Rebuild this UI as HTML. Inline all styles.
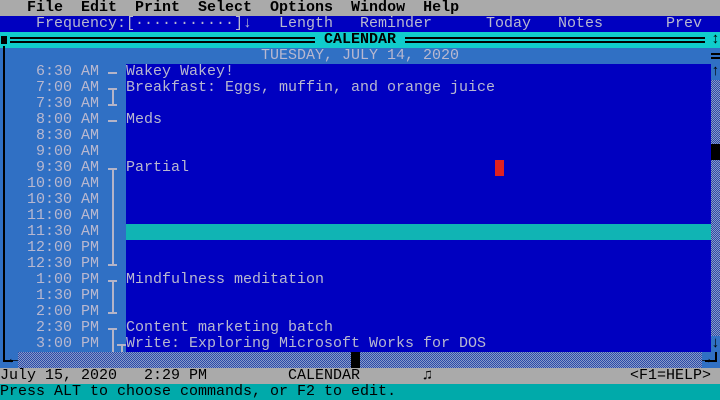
<!DOCTYPE html>
<html><head><meta charset="utf-8"><style>
*{margin:0;padding:0;box-sizing:border-box}
body{width:720px;height:400px;overflow:hidden;background:#0000c0;position:relative;font-family:"Liberation Mono","DejaVu Sans Mono",monospace;font-size:15px;line-height:16px;}
.b{position:absolute}
.t{position:absolute;white-space:pre;height:16px;line-height:16px}
.g{color:#b8b8d0}
.k{color:#000}
.bd{font-weight:bold}
.chk{background:repeating-conic-gradient(#8a9ac8 0 25%,#2a4aa8 0 50%) 0 0/2px 2px}
</style></head><body>
<div class="b" style="left:0;top:0;width:720px;height:16px;background:#aaaaaa"></div>
<div class="b" style="left:0;top:16px;width:720px;height:16px;background:#0000c0"></div>
<div class="b" style="left:0;top:32px;width:720px;height:16px;background:#10cccc"></div>
<div class="b" style="left:0;top:48px;width:711px;height:16px;background:#3070c4"></div>
<div class="b" style="left:0;top:64px;width:126px;height:288px;background:#3070c4"></div>
<div class="b" style="left:126px;top:64px;width:585px;height:288px;background:#0000c0"></div>
<div class="b" style="left:126px;top:224px;width:585px;height:16px;background:#10b4b4"></div>
<div class="b" style="left:0;top:352px;width:720px;height:16px;background:#3070c4"></div>
<div class="b chk" style="left:18px;top:352px;width:684px;height:16px"></div>
<div class="b" style="left:351px;top:352px;width:9px;height:16px;background:#000"></div>
<div class="b" style="left:711px;top:48px;width:9px;height:304px;background:#3070c4"></div>
<div class="b chk" style="left:711px;top:80px;width:9px;height:256px"></div>
<div class="b" style="left:711px;top:144px;width:9px;height:16px;background:#000"></div>
<div class="b" style="left:3px;top:46px;width:2px;height:316px;background:#000"></div>
<div class="b" style="left:3px;top:360px;width:10px;height:2px;background:#000"></div>
<div class="b" style="left:705px;top:360px;width:12px;height:2px;background:#000"></div>
<div class="b" style="left:715px;top:352px;width:2px;height:10px;background:#000"></div>
<div class="b" style="left:0;top:368px;width:720px;height:16px;background:#aaaaaa"></div>
<div class="b" style="left:0;top:384px;width:720px;height:16px;background:#00aaaa"></div>
<div class="b" style="left:495px;top:160px;width:9px;height:16px;background:#e02020"></div>
<div class="b" style="left:10px;top:37px;width:305px;height:6px;border-top:2px solid #000;border-bottom:2px solid #000"></div>
<div class="b" style="left:405px;top:37px;width:300px;height:6px;border-top:2px solid #000;border-bottom:2px solid #000"></div>
<div class="b" style="left:1px;top:36px;width:6px;height:8px;background:#000"></div>
<div class="b" style="left:711px;top:53px;width:9px;height:6px;border-top:2px solid #000;border-bottom:2px solid #000"></div>
<div class="b" style="left:112px;top:88px;width:2px;height:18px;background:#b4b4c8"></div>
<div class="b" style="left:112px;top:168px;width:2px;height:98px;background:#b4b4c8"></div>
<div class="b" style="left:112px;top:280px;width:2px;height:34px;background:#b4b4c8"></div>
<div class="b" style="left:112px;top:328px;width:2px;height:24px;background:#b4b4c8"></div>
<div class="b" style="left:121px;top:344px;width:2px;height:8px;background:#b4b4c8"></div>
<div class="b" style="left:108px;top:72px;width:9px;height:2px;background:#b4b4c8"></div>
<div class="b" style="left:108px;top:88px;width:9px;height:2px;background:#b4b4c8"></div>
<div class="b" style="left:108px;top:104px;width:9px;height:2px;background:#b4b4c8"></div>
<div class="b" style="left:108px;top:120px;width:9px;height:2px;background:#b4b4c8"></div>
<div class="b" style="left:108px;top:168px;width:9px;height:2px;background:#b4b4c8"></div>
<div class="b" style="left:108px;top:264px;width:9px;height:2px;background:#b4b4c8"></div>
<div class="b" style="left:108px;top:280px;width:9px;height:2px;background:#b4b4c8"></div>
<div class="b" style="left:108px;top:312px;width:9px;height:2px;background:#b4b4c8"></div>
<div class="b" style="left:108px;top:328px;width:9px;height:2px;background:#b4b4c8"></div>
<div class="b" style="left:117px;top:344px;width:9px;height:2px;background:#b4b4c8"></div>
<div class="t k bd" style="left:0;top:0">   File  Edit  Print  Select  Options  Window  Help</div>
<div class="t g" style="left:36px;top:16px">Frequency:[···········]↓</div>
<div class="t g" style="left:279px;top:16px">Length</div>
<div class="t g" style="left:360px;top:16px">Reminder</div>
<div class="t g" style="left:486px;top:16px">Today</div>
<div class="t g" style="left:558px;top:16px">Notes</div>
<div class="t g" style="left:666px;top:16px">Prev</div>
<div class="t k bd" style="left:315px;top:32px"> CALENDAR </div>
<div class="t k" style="left:711px;top:32px">↕</div>
<div class="t g" style="left:261px;top:48px">TUESDAY, JULY 14, 2020</div>
<div class="t k" style="left:711px;top:64px">↑</div>
<div class="t k" style="left:711px;top:336px">↓</div>
<div class="t k" style="left:9px;top:352px">←</div>
<div class="t k" style="left:702px;top:352px">→</div>
<div class="t g" style="left:0;top:64px">    6:30 AM
    7:00 AM
    7:30 AM
    8:00 AM
    8:30 AM
    9:00 AM
    9:30 AM
   10:00 AM
   10:30 AM
   11:00 AM
   11:30 AM
   12:00 PM
   12:30 PM
    1:00 PM
    1:30 PM
    2:00 PM
    2:30 PM
    3:00 PM</div>
<div class="t g" style="left:126px;top:64px">Wakey Wakey!
Breakfast: Eggs, muffin, and orange juice

Meds


Partial






Mindfulness meditation


Content marketing batch
Write: Exploring Microsoft Works for DOS</div>
<div class="t k" style="left:0;top:368px">July 15, 2020   2:29 PM</div>
<div class="t k" style="left:288px;top:368px">CALENDAR</div>
<div class="t k" style="left:423px;top:368px">♫</div>
<div class="t k" style="left:630px;top:368px">&lt;F1=HELP&gt;</div>
<div class="t k" style="left:0;top:384px">Press ALT to choose commands, or F2 to edit.</div>
</body></html>
